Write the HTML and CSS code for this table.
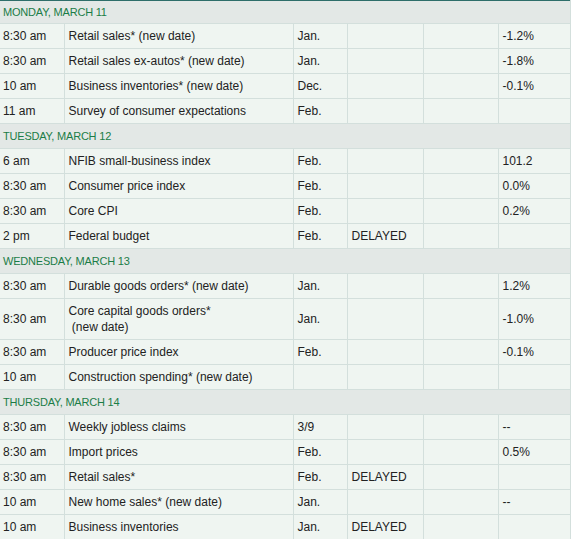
FILE: index.html
```html
<!DOCTYPE html>
<html lang="en">
<head>
    <meta charset="UTF-8">
    <meta name="viewport" content="width=device-width, initial-scale=1.0">
    <title>Economic calendar</title>
    <link rel="stylesheet" href="styles.css">
</head>
<body>
    <table class="calendar">
        <colgroup>
            <col class="c-time">
            <col class="c-report">
            <col class="c-period">
            <col class="c-actual">
            <col class="c-forecast">
            <col class="c-previous">
        </colgroup>
        <tbody>
            <tr class="day first"><td colspan="6">Monday, March 11</td></tr>
            <tr><td>8:30 am</td><td>Retail sales* (new date)</td><td>Jan.</td><td></td><td></td><td>-1.2%</td></tr>
            <tr><td>8:30 am</td><td>Retail sales ex-autos* (new date)</td><td>Jan.</td><td></td><td></td><td>-1.8%</td></tr>
            <tr><td>10 am</td><td>Business inventories* (new date)</td><td>Dec.</td><td></td><td></td><td>-0.1%</td></tr>
            <tr><td>11 am</td><td>Survey of consumer expectations</td><td>Feb.</td><td></td><td></td><td></td></tr>

            <tr class="day"><td colspan="6">Tuesday, March 12</td></tr>
            <tr><td>6 am</td><td>NFIB small-business index</td><td>Feb.</td><td></td><td></td><td>101.2</td></tr>
            <tr><td>8:30 am</td><td>Consumer price index</td><td>Feb.</td><td></td><td></td><td>0.0%</td></tr>
            <tr><td>8:30 am</td><td>Core CPI</td><td>Feb.</td><td></td><td></td><td>0.2%</td></tr>
            <tr><td>2 pm</td><td>Federal budget</td><td>Feb.</td><td>DELAYED</td><td></td><td></td></tr>

            <tr class="day"><td colspan="6">Wednesday, March 13</td></tr>
            <tr><td>8:30 am</td><td>Durable goods orders* (new date)</td><td>Jan.</td><td></td><td></td><td>1.2%</td></tr>
            <tr><td>8:30 am</td><td>Core capital goods orders*<br>&nbsp;(new date)</td><td>Jan.</td><td></td><td></td><td>-1.0%</td></tr>
            <tr><td>8:30 am</td><td>Producer price index</td><td>Feb.</td><td></td><td></td><td>-0.1%</td></tr>
            <tr><td>10 am</td><td>Construction spending* (new date)</td><td></td><td></td><td></td><td></td></tr>

            <tr class="day"><td colspan="6">Thursday, March 14</td></tr>
            <tr><td>8:30 am</td><td>Weekly jobless claims</td><td>3/9</td><td></td><td></td><td>--</td></tr>
            <tr><td>8:30 am</td><td>Import prices</td><td>Feb.</td><td></td><td></td><td>0.5%</td></tr>
            <tr><td>8:30 am</td><td>Retail sales*</td><td>Feb.</td><td>DELAYED</td><td></td><td></td></tr>
            <tr><td>10 am</td><td>New home sales* (new date)</td><td>Jan.</td><td></td><td></td><td>--</td></tr>
            <tr><td>10 am</td><td>Business inventories</td><td>Jan.</td><td>DELAYED</td><td></td><td></td></tr>
        </tbody>
    </table>
</body>
</html>
```

FILE: styles.css
```css
body {
    margin: 0;
    background: #fff;
    font-family: "Liberation Sans", Arial, sans-serif;
    color: #222;
}
.calendar {
    width: 570px;
    table-layout: fixed;
    border-collapse: collapse;
    border-top: 1px solid #2e6e6a;
    font-size: 12px;
    line-height: 16px;
}
.c-time { width: 64px; }
.c-report { width: 229px; }
.c-period { width: 54px; }
.c-actual { width: 76px; }
.c-forecast { width: 75px; }
.c-previous { width: 72px; }

.calendar td {
    background: #eff5f1;
    border: 1px solid #d3dfdc;
    padding: 4px 3px 4px 4px;
    vertical-align: middle;
    white-space: nowrap;
}
.calendar td:first-child {
    border-left: none;
    padding-left: 3px;
}
.day td {
    background: #e3e8e6;
    color: #1b7d46;
    font-size: 11px;
    letter-spacing: -0.2px;
    text-transform: uppercase;
    padding-top: 4px;
    padding-bottom: 4px;
}
.day.first td {
    border-top: none;
    padding-top: 3px;
    padding-bottom: 3px;
}
```
